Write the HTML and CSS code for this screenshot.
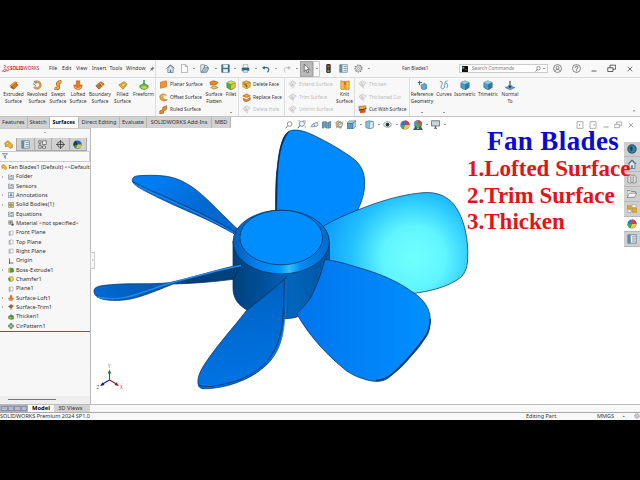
FILE: index.html
```
<!DOCTYPE html>
<html lang="en">
<head>
    <meta charset="UTF-8">
    <meta name="viewport" content="width=device-width, initial-scale=1.0">
    <title>SOLIDWORKS - Fan Blades1</title>
    <link rel="stylesheet" href="styles.css">
</head>
<body>
    <!-- shared icons -->
    <svg class="sprite" width="0" height="0">
        <symbol id="i-extrude" viewBox="0 0 12 12"><path d="M1 7l6-5 3 1-5 5z" fill="#f5a623" stroke="#a55a08" stroke-width=".6"/><path d="M2 9l6-5 3 2-5 5z" fill="#d97a1a" stroke="#7a4208" stroke-width=".6"/><path d="M2 7l3 3" stroke="#444"/></symbol>
        <symbol id="i-revolve" viewBox="0 0 12 12"><path d="M3 2a5 5 0 1 1-1 7l2-1a3 3 0 1 0 0-4z" fill="#f2a132" stroke="#8a5a20" stroke-width=".6"/><path d="M1 4l4 3M2 1l4 3" stroke="#777" stroke-width="1.2"/></symbol>
        <symbol id="i-sweep" viewBox="0 0 12 12"><path d="M2 10c5 1 5-2 4-4s0-4 4-4" fill="none" stroke="#a85a10" stroke-width="4"/><path d="M2 10c5 1 5-2 4-4s0-4 4-4" fill="none" stroke="#f3a43a" stroke-width="2.4"/></symbol>
        <symbol id="i-loft" viewBox="0 0 12 12"><path d="M4 1h4v5h3l-1 4-4 2-4-2-1-4h3z" fill="#ea7a22" stroke="#a84a0a" stroke-width=".6"/><path d="M2 8.500l4 2 4-2" fill="none" stroke="#ffc072"/></symbol>
        <symbol id="i-boundary" viewBox="0 0 12 12"><path d="M1 7l6-5 4 3-6 6z" fill="#e07a1c" stroke="#7b4208" stroke-width=".8"/><path d="M3 6l5 3M6 3l3 4" stroke="#ffd08a"/><path d="M4 7h3" stroke="#345" stroke-width="1.3"/></symbol>
        <symbol id="i-filled" viewBox="0 0 12 12"><path d="M1 6l6-4 4 3-5 6z" fill="#f5b53a" stroke="#94600c" stroke-width=".7"/><path d="M4 6l3-2 2 2-3 2z" fill="#ffe07a" stroke="#a66a08" stroke-width=".6"/></symbol>
        <symbol id="i-freeform" viewBox="0 0 12 12"><path d="M6 0v5" stroke="#2b7d2b" stroke-width="1.5"/><path d="M1 7c2-3 8-3 10 0v2c-2 3-8 3-10 0z" fill="#5cc24a" stroke="#2c6b23" stroke-width=".6"/><path d="M2 9c3-2 5-2 8 0-2 2-6 2-8 0z" fill="#f0c74a"/></symbol>
        <symbol id="i-planar" viewBox="0 0 12 12"><path d="M2 3l8-2v8l-8 2z" fill="#f3952f" stroke="#c26a10" stroke-width=".8"/></symbol>
        <symbol id="i-offset" viewBox="0 0 12 12"><path d="M1 4c3-4 6-3 9-1-3 0-5 1-5 3s3 3 6 3c-4 3-10 2-10-5z" fill="#f1a030" stroke="#9d6010" stroke-width=".7"/><path d="M3 5c2-2 5-2 7-1" stroke="#ffe18a" fill="none"/></symbol>
        <symbol id="i-ruled" viewBox="0 0 12 12"><path d="M1 8l4-2V3l5-2v5l-4 2v3l-5 1z" fill="#ea8b28" stroke="#9a5210" stroke-width=".8"/></symbol>
        <symbol id="i-flatten" viewBox="0 0 12 12"><path d="M1 3c3-3 7-2 10 0L8 6 2 6z" fill="#e88a24" stroke="#8e4f0c" stroke-width=".7"/><path d="M2 9l4-2 5 2-5 2z" fill="#f8c25a" stroke="#9a6a18" stroke-width=".7"/></symbol>
        <symbol id="i-fillet" viewBox="0 0 12 12"><path d="M1 3l5-2 5 2v6l-5 3-5-3z" fill="#4caf3c" stroke="#2d7723" stroke-width=".6"/><path d="M1 3l5-2 5 2-5 2z" fill="#f2ce48"/><path d="M6 6l5-2v5l-5 2z" fill="#f4b73b"/></symbol>
        <symbol id="i-cube" viewBox="0 0 12 12"><path d="M1 3l5-2 5 2v6l-5 3-5-3z" fill="#f1b638" stroke="#9c6a12" stroke-width=".7"/><path d="M1 3l5 2 5-2M6 5v6" stroke="#9c6a12" stroke-width=".7" fill="none"/><path d="M3 5l4 4" stroke="#333" stroke-width="1.3"/></symbol>
        <symbol id="i-replace" viewBox="0 0 12 12"><path d="M1 4l5-3 5 3-5 2z" fill="#f0a22e" stroke="#8e4d0c" stroke-width=".7"/><path d="M2 7l4 2 5-3v3l-5 3-4-2z" fill="#ee8a2a" stroke="#8e4a0c" stroke-width=".7"/></symbol>
        <symbol id="i-ghost" viewBox="0 0 12 12"><path d="M1 5l5-4 5 3-4 4-3-1z" fill="#e6e6e6" stroke="#bcbcbc" stroke-width=".8"/><path d="M3 7l5 4M4 3l4 6" stroke="#bcbcbc"/></symbol>
        <symbol id="i-knit" viewBox="0 0 12 12"><path d="M1 1l4 1v10l-4-1zM11 1L7 2v10l4-1z" fill="#f6c648" stroke="#c07c12" stroke-width=".8"/><path d="M5 1l1 5 1-5M6 3v8" stroke="#d86418" fill="none"/></symbol>
        <symbol id="i-cut" viewBox="0 0 12 12"><path d="M1 2l9-1 1 4-9 2z" fill="#f1a83a" stroke="#7d4b10" stroke-width=".7"/><path d="M2 7l8-1v4l-7 1z" fill="#d3541c"/><path d="M1 7l10-2" stroke="#333" stroke-width="1.2"/></symbol>
        <symbol id="i-refgeo" viewBox="0 0 12 12"><path d="M3 1v5M1 3h5" stroke="#2e7396" stroke-width="1.4"/><path d="M5 6l4-2 3 2v4l-4 2-3-2z" fill="#66a6c6" stroke="#2d5c77" stroke-width=".6"/></symbol>
        <symbol id="i-curves" viewBox="0 0 12 12"><path d="M1 2h2c3 2-2 5 0 8 2 2 4-1 4-4s1-5 3-5M8 3c3 2 3 4 1 7" fill="none" stroke="#4c86a8" stroke-width="1.1"/></symbol>
        <symbol id="i-iso" viewBox="0 0 12 12"><path d="M1 3l5-2 5 2v6l-5 3-5-3z" fill="#4f9cc3" stroke="#245a78" stroke-width=".6"/><path d="M1 3l5-2 5 2-5 2z" fill="#8fcbe4"/><path d="M6 5l5-2v6l-5 3z" fill="#2f789e"/></symbol>
        <symbol id="i-normal" viewBox="0 0 12 12"><path d="M0 9l6-2 6 2-6 3z" fill="#56a2c6" stroke="#245a78" stroke-width=".5"/><path d="M6 1v8M4.500 6.500L6 9l1.500-2.500" stroke="#234" stroke-width="1.2" fill="none"/></symbol>
        <symbol id="i-home" viewBox="0 0 12 12"><path d="M1 6l5-5 5 5" fill="none" stroke="#33566e" stroke-width="1.1"/><path d="M2.500 6v5.500h7V6L6 2.600z" fill="#e3edf3" stroke="#33566e" stroke-width=".8"/><path d="M5 7.500h2v4H5z" fill="#4b7891"/></symbol>
        <symbol id="i-doc" viewBox="0 0 12 12"><path d="M2 .5h5l3 3v8H2z" fill="#fff" stroke="#777" stroke-width=".7"/><path d="M7 .5v3h3" fill="none" stroke="#777" stroke-width=".7"/></symbol>
        <symbol id="i-open" viewBox="0 0 12 12"><path d="M1 1h5v10H1z" fill="#dbe8ef" stroke="#678" stroke-width=".8"/><path d="M2 11l3-6h7l-3 6z" fill="#a9c3d2" stroke="#456" stroke-width=".7"/><path d="M6 3c2-2 4-1 4 2" fill="none" stroke="#205a80"/></symbol>
        <symbol id="i-save" viewBox="0 0 12 12"><path d="M1 1h10v10H1z" fill="#4b7898" stroke="#294f6b" stroke-width=".8"/><path d="M3 1h6v4H3zM3 7h6v4H3z" fill="#eef3f6"/></symbol>
        <symbol id="i-print" viewBox="0 0 12 12"><path d="M3 1h6v4H3z" fill="#fff" stroke="#678" stroke-width=".7"/><path d="M1 5h10v4H1z" fill="#2f6384"/><path d="M3 8h6v3H3z" fill="#e6eef3" stroke="#456" stroke-width=".6"/></symbol>
        <symbol id="i-undo" viewBox="0 0 12 12"><path d="M3 4h4c4 0 4 5 1 7" fill="none" stroke="#2e6b90" stroke-width="1.700"/><path d="M0 4l4-3v6z" fill="#2e6b90"/></symbol>
        <symbol id="i-redo" viewBox="0 0 12 12"><path d="M9 4H5C1 4 1 9 4 11" fill="none" stroke="#bbb" stroke-width="1.400"/><path d="M12 4L8 1v6z" fill="#bbb"/></symbol>
        <symbol id="i-cursor" viewBox="0 0 12 12"><path d="M3 0v10l2.500-2.500L7 12l2-1-1.800-4H10z" fill="#fff" stroke="#333" stroke-width=".8"/></symbol>
        <symbol id="i-light" viewBox="0 0 12 12"><rect x="3" y="0" width="6" height="12" rx="1.500" fill="#333"/><circle cx="6" cy="3" r="1.700" fill="#e03a2c"/><circle cx="6" cy="6" r="1.200" fill="#645a20"/><circle cx="6" cy="9.300" r="1.700" fill="#38b04a"/></symbol>
        <symbol id="i-list" viewBox="0 0 12 12"><path d="M1 1h10v10H1z" fill="#f4f8fa" stroke="#4b6d82" stroke-width=".9"/><path d="M1 1h3.500v10H1z" fill="#5f8ba5"/><path d="M6 3.500h4M6 6h4M6 8.500h4" stroke="#4b6d82" stroke-width=".9"/></symbol>
        <symbol id="i-gear" viewBox="0 0 12 12"><circle cx="6" cy="6" r="4.600" fill="none" stroke="#777" stroke-width="1.500" stroke-dasharray="2 1.200"/><circle cx="6" cy="6" r="3.600" fill="#f5f5f5" stroke="#777" stroke-width=".8"/><circle cx="6" cy="6" r="1.500" fill="none" stroke="#777" stroke-width=".8"/></symbol>
        <symbol id="i-pin" viewBox="0 0 12 12"><path d="M7 1l4 4-2 .5L7 8l-.5 2L2 5.500 4 5l2.500-2z" fill="#777"/><path d="M4 8l-3 3" stroke="#777"/></symbol>
        <symbol id="i-user" viewBox="0 0 12 12"><circle cx="6" cy="6" r="5.300" fill="none" stroke="#555" stroke-width=".9"/><circle cx="6" cy="5" r="2" fill="none" stroke="#555" stroke-width=".9"/><path d="M2.500 9.500c1-3 6-3 7 0" fill="none" stroke="#555" stroke-width=".9"/></symbol>
        <symbol id="i-help" viewBox="0 0 12 12"><circle cx="6" cy="6" r="5.300" fill="none" stroke="#555" stroke-width=".9"/><path d="M4.300 4.800c0-2.400 3.500-2.300 3.500-.2C7.800 6 6 6 6 7.500M6 8.500v1.200" fill="none" stroke="#444" stroke-width="1.100"/></symbol>
        <symbol id="i-min" viewBox="0 0 12 12"><path d="M1 10h10" stroke="currentColor" stroke-width="1.600"/></symbol>
        <symbol id="i-restore" viewBox="0 0 12 12"><path d="M1 5h7v5H1zM4 5V1.500h7.500V7H8" fill="none" stroke="currentColor"/></symbol>
        <symbol id="i-close" viewBox="0 0 12 12"><path d="M1.500 1.500l9 9M10.500 1.500l-9 9" stroke="currentColor" stroke-width="1.400"/></symbol>
        <symbol id="i-pane" viewBox="0 0 12 12"><path d="M1.500 1h9v10h-9z" fill="none" stroke="currentColor"/><path d="M6 4v4L4 6z" fill="currentColor"/></symbol>
        <symbol id="i-pane-r" viewBox="0 0 12 12"><path d="M1.500 1h9v10h-9z" fill="none" stroke="currentColor"/><path d="M7 4v4l2-2z" fill="currentColor"/></symbol>
        <symbol id="i-search" viewBox="0 0 12 12"><circle cx="7" cy="4.500" r="3.500" fill="none" stroke="currentColor"/><path d="M4.500 7L1 11" stroke="currentColor" stroke-width="1.300"/></symbol>
        <symbol id="i-zoomarea" viewBox="0 0 12 12"><path d="M1 1h3M8 1h3v3M11 8v3" fill="none" stroke="#789" stroke-width=".8"/><circle cx="6.500" cy="5" r="3.500" fill="#eef4f7" stroke="#667" stroke-width=".9"/><path d="M4 7.500L1 11" stroke="#667" stroke-width="1.300"/></symbol>
        <symbol id="i-prev" viewBox="0 0 12 12"><path d="M1 9l3-4h4l3-3M1 9h5l2-4" fill="#d6dde1" stroke="#667882" stroke-width=".9"/><circle cx="8" cy="6" r="2.500" fill="#eef" stroke="#678" stroke-width=".9"/></symbol>
        <symbol id="i-section" viewBox="0 0 12 12"><path d="M0 3l3-1v8l-3 1zM4 2l3 1v8l-3-1zM8 3l4-1v8l-4 1z" fill="#6ba3bd" stroke="#406577" stroke-width=".7"/></symbol>
        <symbol id="i-dynview" viewBox="0 0 12 12"><path d="M1 3l4-2 5 3-2 7-6-2z" fill="#d7b98a" stroke="#7a7466" stroke-width=".7"/><circle cx="7" cy="6" r="3" fill="#d8eaf2" stroke="#577" stroke-width=".8"/><path d="M1 11L11 2" stroke="#d58a2c"/></symbol>
        <symbol id="i-orient" viewBox="0 0 12 12"><path d="M0 4h8v8H0z" fill="#609dbc" stroke="#345e76" stroke-width=".6"/><path d="M0 4l3-3h9L8 4zM8 12l4-4V1L8 4z" fill="#b4d3e1" stroke="#456f86" stroke-width=".6"/></symbol>
        <symbol id="i-display" viewBox="0 0 12 12"><path d="M1 2l4-1 6 1v8l-5 2-5-2z" fill="#89bdd4" stroke="#3f687d" stroke-width=".7"/><path d="M6 3l5-1v8l-5 2z" fill="#dbe9ef" stroke="#3f687d" stroke-width=".5"/></symbol>
        <symbol id="i-eye" viewBox="0 0 12 12"><path d="M0 6c3-5 9-5 12 0-3 5-9 5-12 0z" fill="#e7edef" stroke="#667" stroke-width=".8"/><circle cx="6" cy="6" r="2.500" fill="#333"/></symbol>
        <symbol id="i-ball" viewBox="0 0 12 12"><circle cx="6" cy="6" r="5.500" fill="#3d71c4"/><path d="M6 6V.5A5.500 5.500 0 0 1 11.500 6z" fill="#db3c34"/><path d="M6 6h5.500A5.500 5.500 0 0 1 4 11z" fill="#f1c644"/><path d="M6 6l-2 5A5.500 5.500 0 0 1 .5 6z" fill="#4aa950"/></symbol>
        <symbol id="i-appear" viewBox="0 0 12 12"><circle cx="6" cy="6" r="5.500" fill="#2a62b8"/><path d="M6 6L4 .8A5.500 5.500 0 0 0 1 8z" fill="#243a4c"/><path d="M6 6l5.500 0A5.500 5.500 0 0 1 4 11z" fill="#d8c83a"/><path d="M6 6l-2 5A5.500 5.500 0 0 1 1 8z" fill="#3c9a48"/></symbol>
        <symbol id="i-ballscene" viewBox="0 0 12 12"><circle cx="6" cy="5" r="4.800" fill="#58a25d"/><path d="M6 5V.2A4.800 4.800 0 0 1 10.800 5z" fill="#d6473f"/><path d="M6 5H1.200A4.800 4.800 0 0 1 6 .2z" fill="#5b8ac0"/><path d="M0 12l3-5 3 4 3-4 3 5z" fill="#3f5965"/></symbol>
        <symbol id="i-monitor" viewBox="0 0 12 12"><path d="M.5 1h11v7H.5z" fill="#c9d5dc" stroke="#555" stroke-width="1"/><path d="M4 11h4M6 8v3" stroke="#555" stroke-width="1.300"/></symbol>
        <symbol id="i-part" viewBox="0 0 12 12"><path d="M1 4l4-3 3 2 3 3v4L8 11 5 8 2 9z" fill="#f0b62e" stroke="#96690f" stroke-width=".8"/><circle cx="4.500" cy="4.500" r="1.400" fill="#fff4c0" stroke="#96690f" stroke-width=".6"/></symbol>
        <symbol id="i-config" viewBox="0 0 12 12"><path d="M1 1h3v3H1zM6 1h5v5H6zM1 7h3v4H1zM6 8h4v3H6z" fill="#eee" stroke="#555" stroke-width=".9"/><path d="M2.500 4v3M4 9h2" stroke="#555" stroke-width=".9"/></symbol>
        <symbol id="i-target" viewBox="0 0 12 12"><circle cx="6" cy="6" r="4" fill="none" stroke="#333" stroke-width="1"/><path d="M6 0v12M0 6h12" stroke="#333" stroke-width="1"/></symbol>
        <symbol id="i-filter" viewBox="0 0 12 12"><path d="M1 1h10L7 6v5L5 9.500V6z" fill="#cfe0ea" stroke="#3d6480" stroke-width="1.100"/></symbol>
        <symbol id="i-box" viewBox="0 0 12 12"><path d="M1 2h4l1 1h5v8H1z" fill="#edf0f2" stroke="#566671" stroke-width="1"/><path d="M3.500 5h5v4h-5z" fill="none" stroke="#566671" stroke-width=".9"/></symbol>
        <symbol id="i-annot" viewBox="0 0 12 12"><path d="M1 1h10v10H1z" fill="#edf2f8" stroke="#566671" stroke-width="1"/><path d="M3.500 9.500L6 3l2.500 6.500M4.500 7h3" fill="none" stroke="#2a56a8" stroke-width="1.200"/></symbol>
        <symbol id="i-bodies" viewBox="0 0 12 12"><path d="M1 1h10v10H1z" fill="#ecebdc" stroke="#566671" stroke-width="1"/><path d="M3 4l3-1 3 1v4L6 9.500 3 8z" fill="#c49e27" stroke="#6b571a" stroke-width=".7"/></symbol>
        <symbol id="i-material" viewBox="0 0 12 12"><path d="M1 2h9M1 5h9M1 8h5M2 1v8M5 1v8M8 1v5" stroke="#666" stroke-width="1.200"/><circle cx="9" cy="9" r="2.500" fill="#555"/></symbol>
        <symbol id="i-plane" viewBox="0 0 12 12"><path d="M2 3h2v8H2zM4 2h6v8H4z" fill="#fafafa" stroke="#778" stroke-width=".8"/></symbol>
        <symbol id="i-origin" viewBox="0 0 12 12"><path d="M3 1v9h8" fill="none" stroke="#333" stroke-width="1.400"/><circle cx="3" cy="10" r="1.500" fill="#b22"/></symbol>
        <symbol id="i-boss" viewBox="0 0 12 12"><path d="M1 3l4-2v9l-4 1z" fill="#efc33b" stroke="#7b6413" stroke-width=".6"/><path d="M5 3l4-1 2 2v6l-6 1z" fill="#3aa33d" stroke="#1f6722" stroke-width=".7"/></symbol>
        <symbol id="i-thicken" viewBox="0 0 12 12"><path d="M1 5l5-4 5 3v6l-5 1-5-2z" fill="#3aa33d" stroke="#1f6722" stroke-width=".7"/><path d="M3 6h4v4H3z" fill="#e89a3b"/></symbol>
        <symbol id="i-chamfer" viewBox="0 0 12 12"><circle cx="6" cy="6" r="5" fill="#efd256" stroke="#5b762b" stroke-width=".8"/><path d="M2 3a5 5 0 0 0 3 8V6z" fill="#43a03e"/></symbol>
        <symbol id="i-trim" viewBox="0 0 12 12"><path d="M1 5l5-4 5 3-5 4z" fill="#b7652e" stroke="#5c3517" stroke-width=".8"/><path d="M3 7l6 4M8 6l-3 5" stroke="#555"/></symbol>
        <symbol id="i-pattern" viewBox="0 0 12 12"><path d="M4 1h4v3H4zM4 8h4v3H4zM1 4h3v4H1zM8 4h3v4H8z" fill="#7cc46f" stroke="#2b6a28" stroke-width=".9"/></symbol>
        <symbol id="i-globe" viewBox="0 0 12 12"><circle cx="6" cy="6" r="5.700" fill="#285b79"/><circle cx="6" cy="6" r="4.200" fill="#3f7e9f"/><path d="M3 4l3-1 1 3-2 3z" fill="#1c3f55"/></symbol>
        <symbol id="i-library" viewBox="0 0 12 12"><path d="M1 3l3-2 2 1 2-1 3 2v7l-3 1-2-1-2 1-3-1z" fill="#eee" stroke="#666" stroke-width=".8"/><path d="M4 2v8M6 3v8M8 2v8" stroke="#777" stroke-width=".8"/></symbol>
        <symbol id="i-folder" viewBox="0 0 12 12"><path d="M0 10V2h4l1 1h5v2" fill="#eee" stroke="#666" stroke-width=".8"/><path d="M0 10l3-5h9l-3 5z" fill="#f6f6f6" stroke="#666" stroke-width=".8"/></symbol>
        <symbol id="i-palette" viewBox="0 0 12 12"><path d="M0 2h5v4H0zM6 5h6v5H6z" fill="#e3a92c" stroke="#a6741a" stroke-width=".5"/><path d="M6 1h5v3H6zM1 7h4v3H1z" fill="#fff" stroke="#888" stroke-width=".7"/></symbol>
    </svg>

    <div class="app">
        <header class="titlebar">
            <div class="brand">
                <svg class="brand-mark" viewBox="0 0 14 12"><path d="M3 1c4-1 5 2 1 4M1 11c3-5 8-6 6-1-1 2-4 1-6 1M13 3C9 2 8 4 11 6s0 5-4 4" fill="none" stroke="#c8202f" stroke-width="1.300"/></svg>
                <b>SOLID</b><span>WORKS</span>
            </div>
            <nav class="menu"><span>File</span><span>Edit</span><span>View</span><span>Insert</span><span>Tools</span><span>Window</span><svg class="ic xs"><use href="#i-pin"/></svg></nav>
            <div class="quick">
                <svg class="ic"><use href="#i-home"/></svg>
                <svg class="ic"><use href="#i-doc"/></svg><i class="caret"></i>
                <svg class="ic"><use href="#i-open"/></svg><i class="caret"></i>
                <svg class="ic"><use href="#i-save"/></svg><i class="caret"></i>
                <svg class="ic"><use href="#i-print"/></svg><i class="caret"></i>
                <svg class="ic s"><use href="#i-undo"/></svg><i class="caret"></i>
                <svg class="ic s"><use href="#i-redo"/></svg><i class="caret"></i>
                <span class="pick"><svg class="ic"><use href="#i-cursor"/></svg></span><span class="pick-more"><i class="caret"></i></span>
                <svg class="ic"><use href="#i-light"/></svg>
                <svg class="ic"><use href="#i-list"/></svg>
                <svg class="ic"><use href="#i-gear"/></svg><i class="caret"></i>
            </div>
            <span class="doc-title">Fan Blades1</span>
            <div class="search">
                <span class="prompt">&gt;_</span><span class="search-text">Search Commands</span>
                <svg class="ic xs"><use href="#i-search"/></svg><i class="caret"></i>
            </div>
            <div class="window-buttons">
                <svg class="ic"><use href="#i-user"/></svg>
                <svg class="ic"><use href="#i-help"/></svg>
                <svg class="ic xs"><use href="#i-min"/></svg>
                <svg class="ic"><use href="#i-restore"/></svg>
                <svg class="ic xs"><use href="#i-close"/></svg>
            </div>
        </header>

        <section class="ribbon">
            <div class="group create">
                <div class="tool"><svg class="ic big"><use href="#i-extrude"/></svg><span>Extruded<br>Surface</span></div>
                <div class="tool"><svg class="ic big"><use href="#i-revolve"/></svg><span>Revolved<br>Surface</span></div>
                <div class="tool"><svg class="ic big"><use href="#i-sweep"/></svg><span>Swept<br>Surface</span></div>
                <div class="tool"><svg class="ic big"><use href="#i-loft"/></svg><span>Lofted<br>Surface</span></div>
                <div class="tool"><svg class="ic big"><use href="#i-boundary"/></svg><span>Boundary<br>Surface</span></div>
                <div class="tool"><svg class="ic big"><use href="#i-filled"/></svg><span>Filled<br>Surface</span></div>
                <div class="tool"><svg class="ic big"><use href="#i-freeform"/></svg><span>Freeform</span></div>
            </div>
            <div class="group derive">
                <div class="stack">
                    <span><svg class="ic"><use href="#i-planar"/></svg>Planar Surface</span>
                    <span><svg class="ic"><use href="#i-offset"/></svg>Offset Surface</span>
                    <span><svg class="ic"><use href="#i-ruled"/></svg>Ruled Surface</span>
                </div>
                <div class="tool"><svg class="ic big"><use href="#i-flatten"/></svg><span>Surface<br>Flatten</span></div>
                <div class="tool"><svg class="ic big"><use href="#i-fillet"/></svg><span>Fillet</span><i class="caret more"></i></div>
            </div>
            <div class="group faces">
                <div class="stack">
                    <span><svg class="ic"><use href="#i-cube"/></svg>Delete Face</span>
                    <span><svg class="ic"><use href="#i-replace"/></svg>Replace Face</span>
                    <span class="off"><svg class="ic"><use href="#i-ghost"/></svg>Delete Hole</span>
                </div>
            </div>
            <div class="group modify">
                <div class="stack">
                    <span class="off"><svg class="ic"><use href="#i-ghost"/></svg>Extend Surface</span>
                    <span class="off"><svg class="ic"><use href="#i-ghost"/></svg>Trim Surface</span>
                    <span class="off"><svg class="ic"><use href="#i-ghost"/></svg>Untrim Surface</span>
                </div>
                <div class="tool"><svg class="ic big"><use href="#i-knit"/></svg><span>Knit<br>Surface</span></div>
            </div>
            <div class="group thicken">
                <div class="stack">
                    <span class="off"><svg class="ic"><use href="#i-ghost"/></svg>Thicken</span>
                    <span class="off"><svg class="ic"><use href="#i-ghost"/></svg>Thickened Cut</span>
                    <span><svg class="ic"><use href="#i-cut"/></svg>Cut With Surface</span>
                </div>
            </div>
            <div class="group views">
                <div class="tool"><svg class="ic big"><use href="#i-refgeo"/></svg><span>Reference<br>Geometry</span><i class="caret more"></i></div>
                <div class="tool"><svg class="ic big"><use href="#i-curves"/></svg><span>Curves</span><i class="caret more"></i></div>
                <div class="tool"><svg class="ic big"><use href="#i-iso"/></svg><span>Isometric</span></div>
                <div class="tool"><svg class="ic big"><use href="#i-iso"/></svg><span>Trimetric</span></div>
                <div class="tool"><svg class="ic big"><use href="#i-normal"/></svg><span>Normal<br>To</span></div>
            </div>
            <span class="collapse">⌃</span>
        </section>

        <main class="workspace">
            <nav class="tabs">
                <span>Features</span><span>Sketch</span><span class="active">Surfaces</span><span>Direct Editing</span><span>Evaluate</span><span>SOLIDWORKS Add-Ins</span><span>MBD</span>
            </nav>
            <div class="columns">
                <aside class="panel">
                    <div class="grip"></div>
                    <div class="panel-tabs">
                        <span class="active"><svg class="ic"><use href="#i-part"/></svg></span>
                        <span><svg class="ic"><use href="#i-list"/></svg></span>
                        <span><svg class="ic"><use href="#i-config"/></svg></span>
                        <span><svg class="ic"><use href="#i-target"/></svg></span>
                        <span><svg class="ic"><use href="#i-appear"/></svg></span>
                    </div>
                    <div class="filter"><svg class="ic xs"><use href="#i-filter"/></svg></div>
                    <div class="root"><svg class="ic xs"><use href="#i-part"/></svg>Fan Blades1 (Default) &lt;&lt;Default</div>
                    <ul class="tree">
                        <li class="open"><svg class="ic xs"><use href="#i-box"/></svg>Folder</li>
                        <li><svg class="ic xs"><use href="#i-box"/></svg>Sensors</li>
                        <li class="open"><svg class="ic xs"><use href="#i-annot"/></svg>Annotations</li>
                        <li class="open"><svg class="ic xs"><use href="#i-bodies"/></svg>Solid Bodies(1)</li>
                        <li><svg class="ic xs"><use href="#i-box"/></svg>Equations</li>
                        <li><svg class="ic xs"><use href="#i-material"/></svg>Material &lt;not specified&gt;</li>
                        <li><svg class="ic xs"><use href="#i-plane"/></svg>Front Plane</li>
                        <li><svg class="ic xs"><use href="#i-plane"/></svg>Top Plane</li>
                        <li><svg class="ic xs"><use href="#i-plane"/></svg>Right Plane</li>
                        <li><svg class="ic xs"><use href="#i-origin"/></svg>Origin</li>
                        <li class="open"><svg class="ic xs"><use href="#i-boss"/></svg>Boss-Extrude1</li>
                        <li><svg class="ic xs"><use href="#i-chamfer"/></svg>Chamfer1</li>
                        <li><svg class="ic xs"><use href="#i-plane"/></svg>Plane1</li>
                        <li class="open"><svg class="ic xs"><use href="#i-loft"/></svg>Surface-Loft1</li>
                        <li class="open"><svg class="ic xs"><use href="#i-trim"/></svg>Surface-Trim1</li>
                        <li><svg class="ic xs"><use href="#i-thicken"/></svg>Thicken1</li>
                        <li><svg class="ic xs"><use href="#i-pattern"/></svg>CirPattern1</li>
                    </ul>
                    <div class="rollback"></div>
                    <div class="scroll"><div class="thumb"></div></div>
                </aside>
                <div class="viewport">
                    <svg class="model" viewBox="91 127 549 276">
                        <defs>
                            <linearGradient id="body" x1="233" x2="330" y1="0" y2="0" gradientUnits="userSpaceOnUse"><stop offset="0" stop-color="#00427e"/><stop offset=".3" stop-color="#004f99"/><stop offset=".6" stop-color="#0066be"/><stop offset="1" stop-color="#0054a0"/></linearGradient>
                            <linearGradient id="rim" x1="233" x2="330" y1="0" y2="0" gradientUnits="userSpaceOnUse"><stop offset="0" stop-color="#005fb8"/><stop offset=".25" stop-color="#0080f0"/><stop offset=".48" stop-color="#0098ff"/><stop offset=".58" stop-color="#35bdff"/><stop offset=".7" stop-color="#008cf5"/><stop offset="1" stop-color="#0068c8"/></linearGradient>
                            <radialGradient id="glow" cx="414" cy="257" r="98" gradientUnits="userSpaceOnUse"><stop offset="0" stop-color="#70ffff"/><stop offset=".32" stop-color="#60f5ff"/><stop offset=".65" stop-color="#22c0ff"/><stop offset="1" stop-color="#0a98fb"/></radialGradient>
                            <linearGradient id="front" x1="297" x2="430" y1="0" y2="0" gradientUnits="userSpaceOnUse"><stop offset="0" stop-color="#0075ee"/><stop offset="1" stop-color="#0090ff"/></linearGradient>
                            <linearGradient id="low" x1="240" x2="250" y1="290" y2="388" gradientUnits="userSpaceOnUse"><stop offset="0" stop-color="#0064c6"/><stop offset="1" stop-color="#0074e6"/></linearGradient>
                            <linearGradient id="left" x1="94" x2="242" y1="0" y2="0" gradientUnits="userSpaceOnUse"><stop offset="0" stop-color="#0069d2"/><stop offset=".5" stop-color="#0059b2"/><stop offset=".65" stop-color="#003d7c"/><stop offset="1" stop-color="#00427e"/></linearGradient>
                            <linearGradient id="upper" x1="160" x2="200" y1="175" y2="215" gradientUnits="userSpaceOnUse"><stop offset="0" stop-color="#007cf2"/><stop offset="1" stop-color="#0068d0"/></linearGradient>
                        </defs>
                        <g stroke="#06294d" stroke-width=".7" stroke-linejoin="round">
                            <!-- top blade -->
                            <path d="M275.700 212C275.700 190 275.900 176 277.300 166.700C279 150 282 132 291 129.500C298 128 306 130 320 137.500C332 143.500 340 148.500 349 154.500C360 161.500 365 170 364.700 183C364.500 193 361.500 201 357.700 209L323 227z" fill="#008aff"/>
                            <path d="M275.700 209C275.700 190 275.900 176 277.300 166.700C279 150 282 134 289 130.500C280 142 278.500 160 277.500 176L276.700 209z" fill="#01325f" stroke-width=".4"/>
                            <!-- upper left blade -->
                            <path d="M132.300 179.300C132.500 176.500 134 175 139 174.700C150 174 158 174.300 166 175.200C180 177 193 185 206.700 198C219 210 228 219 238 228.500L234 232.700C222 226 211 220.500 200 215.500C182 207.500 165 200.500 150 192.500C139 187 132 183 132.300 179.300z" fill="url(#upper)"/>
                            <path d="M132.500 180.500C155 193 190 204 234.500 230.500" fill="none" stroke-width=".6"/>
                            <path d="M134 182.500C155 195 190 206 233.500 231.500" fill="none" stroke="#1695ff" stroke-width=".8"/>
                            <!-- right blade -->
                            <path d="M323.500 225C334 219 346 213.500 357.700 209C379 200.500 401 193.500 423 191.700C438 190.500 450 196 457 208C465 221 468.500 240 467.700 257C467.500 268 464 275 457 279C446 286 431 290 415 292.300L325 266z" fill="url(#glow)"/>
                            <!-- hub -->
                            <path d="M233 240V287C233 297 238 304 247 309L285 317.700C289 317.700 293 317 297 316L320 295L329.500 265V240z" fill="url(#body)"/>
                            <ellipse cx="281.200" cy="241" rx="48.200" ry="31.900" fill="url(#rim)"/>
                            <ellipse cx="281.200" cy="236.500" rx="41.400" ry="27.300" fill="#008eff"/>
                            <!-- left blade -->
                            <path d="M94 290C94 285.500 100 284.600 110 283.800C132 281.500 151 284 170 281.500C194 276.500 218 268 241.700 263.300L240 267L233.300 278.300C213 281 193 282.500 173 283C161 288 151 292 140 295.500C130 299 120 299.700 110 299.300C99 298.500 94 295 94 290z" fill="url(#left)"/>
                            <path d="M97 296C127 303 148 287 173 281.500C195 275.500 218 269 241 264.500" fill="none" stroke="#188fee" stroke-width="1.300"/>
                            <!-- lower left blade -->
                            <path d="M285.700 276.700C278 284 272 289 266.700 293.300C260 299 254 303.500 246.700 309.300C233 327 219 342 206.700 360C202 367 198.500 373 198 379C197.500 384 199 387.500 203 387.700C214 388 226 385.500 236.700 381.700C247 378 256 373 263.300 366.700C273 359 278 349 280.500 341C284 330 284.500 310 286 297z" fill="url(#low)"/>
                            <path d="M199 384C201 386 208 386 216 384.700C232 382 248 377 260 367C270 359 278 346 281 330C284 311 284 294 284.300 279" fill="none" stroke-width=".7"/>
                            <path d="M286 278V299C284.800 322 284 342 271 358" fill="none" stroke="#238ce5" stroke-width=".8"/>
                            <!-- lower right blade -->
                            <path d="M325 258.300C335 260 344 262 353 265C367 269 380 273 390 278C399 282 407 287 413.300 291.700C424 298 430 308 430.300 318C430.300 325 429 332 426.700 335C422 342 418 348 413 353C407 360 402 366 396.700 370C391 375 387 379 381 380C376 381 371 380 367 379C359 377 353 374 346.700 370C337 362 328 354 320 345C311 335 303 324 296.700 312.700C303 306 310 300 313 291.700C319 280 322 269 325 258.300z" fill="url(#front)"/>
                            <path d="M430.300 318C430 327 427 333 425 336C419 345 406 360 396 369.500C389 376 384 379 376 379.500" fill="none" stroke="#022e5e" stroke-width="1.400"/>
                        </g>
                        <!-- axis triad -->
                        <g class="triad">
                            <path d="M109.500 379V370" stroke="#187a18"/><path d="M107.800 372.500l1.700-4 1.700 4z" fill="#187a18"/>
                            <path d="M109.500 379l7 4" stroke="#a31515"/><path d="M114.500 384l4.500 1-2.700-3.700z" fill="#a31515"/>
                            <path d="M109.500 379l-7 4" stroke="#15158f"/><path d="M104.500 384l-4.500 1 2.700-3.700z" fill="#15158f"/>
                            <text x="108.100" y="367" fill="#777">Y</text><text x="120" y="387.500" fill="#d44">X</text><text x="96.500" y="387.500" fill="#55c">Z</text>
                        </g>
                    </svg>
                    <span class="splitter">‹</span>
                    <div class="taskpane">
                        <span><svg class="ic"><use href="#i-globe"/></svg></span>
                        <span><svg class="ic"><use href="#i-home"/></svg></span>
                        <span><svg class="ic"><use href="#i-library"/></svg></span>
                        <span><svg class="ic"><use href="#i-folder"/></svg></span>
                        <span><svg class="ic"><use href="#i-palette"/></svg></span>
                        <span class="active"><svg class="ic"><use href="#i-ball"/></svg></span>
                        <span><svg class="ic"><use href="#i-list"/></svg></span>
                    </div>
                    <div class="caption">
                        <h1>Fan Blades</h1>
                        <p>1.Lofted Surface</p>
                        <p>2.Trim Surface</p>
                        <p>3.Thicken</p>
                    </div>
                </div>
            </div>
            <div class="view-tools">
                <svg class="ic s"><use href="#i-search"/></svg>
                <svg class="ic"><use href="#i-zoomarea"/></svg>
                <svg class="ic"><use href="#i-prev"/></svg>
                <svg class="ic"><use href="#i-section"/></svg>
                <svg class="ic"><use href="#i-dynview"/></svg>
                <svg class="ic"><use href="#i-orient"/></svg><i class="caret"></i>
                <svg class="ic"><use href="#i-display"/></svg><i class="caret"></i>
                <svg class="ic"><use href="#i-eye"/></svg><i class="caret"></i>
                <svg class="ic big"><use href="#i-ball"/></svg>
                <svg class="ic big"><use href="#i-ballscene"/></svg><i class="caret"></i>
                <svg class="ic"><use href="#i-monitor"/></svg><i class="caret"></i>
            </div>
            <div class="doc-buttons">
                <svg class="ic s"><use href="#i-pane"/></svg>
                <svg class="ic s"><use href="#i-pane-r"/></svg>
                <svg class="ic xs"><use href="#i-min"/></svg>
                <svg class="ic s"><use href="#i-restore"/></svg>
                <svg class="ic xs"><use href="#i-close"/></svg>
            </div>
        </main>

        <div class="sheet-tabs">
            <span class="nav"><i></i><i></i><i></i><i></i></span>
            <span class="model-tab">Model</span><span class="views-tab">3D Views</span>
        </div>
        <footer class="status">
            <span class="version">SOLIDWORKS Premium 2024 SP1.0</span>
            <span class="mode">Editing Part</span>
            <span class="units">MMGS</span>
            <span class="units-more">▴</span>
            <svg class="ic xs"><use href="#i-gear"/></svg>
        </footer>
    </div>
</body>
</html>
```

FILE: styles.css
```
* {
    box-sizing: border-box;
}
body {
    margin: 0;
    padding: 60px 0;
    width: 640px;
    height: 480px;
    overflow: hidden;
    background-color: #000;
    color: #333;
    font-family: "Noto Sans", "Open Sans", sans-serif;
    font-size: 5.2px;
    line-height: 6.5px;
    white-space: nowrap;
}
.sprite {
    display: block;
}
.app {
    display: flex;
    flex-direction: column;
    height: 360px;
    background-color: #f8f8f8;
    overflow: hidden;
}
.ic {
    width: 9px;
    height: 9px;
    flex: none;
}
.ic.s {
    width: 8px;
    height: 8px;
}
.ic.xs {
    width: 6px;
    height: 6px;
}
.ic.big {
    width: 10px;
    height: 10px;
}
.caret {
    width: 0;
    height: 0;
    border: 1.2px solid transparent;
    border-top: 1.5px solid #333;
    border-bottom: 0;
}

/* title bar */
.titlebar {
    display: grid;
    grid-template-columns: 45px 111px 216px 86px 90px 92px;
    align-items: center;
    height: 17.500px;
    border-bottom: 1px solid #dcdcdc;
}
.brand {
    display: flex;
    align-items: center;
    padding-left: 1.500px;
    color: #c8202f;
    font-size: 4.500px;
}
.brand-mark {
    width: 8px;
    height: 7px;
    margin-right: .5px;
}
.menu {
    display: grid;
    grid-template-columns: 13px 14px 16px 17.500px 16.500px 23px 8px;
    align-items: center;
    padding-left: 4px;
    height: 17px;
    border-right: 1px solid #ddd;
}
.quick {
    display: grid;
    grid-template-columns: 18px 11px 8px 13px 9px 11px 8px 13px 8px 12px 8px 13px 7px 13px 7px 16px 14px 16px 5px;
    align-items: center;
    justify-items: center;
    padding-left: 5px;
    height: 17px;
}
.pick, .pick-more {
    display: flex;
    align-items: center;
    justify-content: center;
    width: 13px;
    height: 16px;
    background-color: #b9b9b9;
    border: 1px solid #a3a3a3;
}
.pick-more {
    width: 7px;
    background-color: #f8f8f8;
    border-color: #ccc;
}
.doc-title {
    padding-left: 30px;
    font-size: 4.700px;
}
.search {
    display: flex;
    align-items: center;
    height: 9px;
    margin: 0 0 0 1px;
    padding: 0 2px;
    background-color: #fff;
    border: 1px solid #ccc;
}
.prompt {
    width: 6px;
    height: 6px;
    background-color: #111;
    color: #fff;
    font: bold 4px/5px "Liberation Mono", monospace;
}
.search-text {
    width: 68px;
    padding-left: 4px;
    color: #777;
    font-size: 4.800px;
}
.search .caret {
    margin-left: 2px;
}
.window-buttons {
    display: grid;
    grid-template-columns: 18px 19px 17px 18px 18px;
    align-items: center;
    justify-items: center;
    padding-left: .5px;
}

/* ribbon */
.ribbon {
    display: flex;
    height: 39px;
    border-bottom: 1px solid #c4c4c4;
    font-size: 4.800px;
}
.group {
    display: grid;
    height: 38px;
    border-right: 1px solid #ddd;
}
.create {
    grid-template-columns: 27px 20px 22px 18px 26px 19px 23px;
    width: 156px;
}
.derive {
    grid-template-columns: 48px 20px 14px;
    width: 83px;
}
.faces {
    width: 46px;
}
.modify {
    grid-template-columns: 50px 19px;
    width: 70px;
}
.thicken {
    width: 55px;
}
.views {
    grid-template-columns: 24px 20px 22px 24px 20px;
    width: 220px;
    border-right: 0;
}
.tool {
    display: flex;
    position: relative;
    flex-direction: column;
    align-items: center;
    padding-top: 2.500px;
    text-align: center;
}
.tool .ic {
    margin-bottom: 1px;
}
.more {
    position: absolute;
    top: 34px;
}
.stack {
    display: grid;
    grid-template-rows: repeat(3, 12.700px);
    padding-left: 2.500px;
    padding-top: .5px;
}
.stack span {
    display: flex;
    align-items: center;
    gap: 2.500px;
}
.off {
    color: #bbb;
}
.collapse {
    align-self: flex-end;
    margin: 0 0 0 auto;
    padding-right: 4px;
}

/* command tabs */
.workspace {
    position: relative;
    height: 287px;
    background-color: #fff;
}
.tabs {
    display: grid;
    grid-template-columns: 27.500px 22px 29.500px 41px 27px 65px 19px;
    width: 231px;
    height: 11px;
    background-color: #d2d2d2;
    font-size: 5.500px;
    line-height: 11px;
    text-align: center;
}
.tabs span {
    border-right: 1px solid #b4b4b4;
}
.tabs .active {
    background-color: #fff;
    color: #000;
    font-weight: bold;
    font-size: 5.300px;
}
.columns {
    display: flex;
    height: 276px;
}

/* feature tree */
.panel {
    display: flex;
    flex-direction: column;
    width: 91px;
    background-color: #f7f7f7;
    border-right: 1px solid #bbb;
    overflow: hidden;
    font-size: 5.550px;
}
.grip {
    height: 10.500px;
    border-top: 1px solid #c8c8c8;
}
.grip::after {
    content: "";
    display: block;
    width: 2px;
    height: 1px;
    margin: 3px 0 0 44px;
    background-color: #aaa;
}
.panel-tabs {
    display: grid;
    grid-template-columns: repeat(5, 17.400px);
    height: 13px;
    background-color: #f4f4f4;
}
.panel-tabs span {
    display: flex;
    align-items: center;
    justify-content: center;
    background-color: #d0d0d0;
    border: solid #aaa;
    border-width: 0 1px 1px 0;
}
.panel-tabs .active {
    background-color: #f7f7f7;
    border-bottom: 0;
}
.filter {
    display: flex;
    align-items: center;
    height: 10.500px;
    padding-left: 2px;
    border: 1px solid #ccc;
    border-left: 0;
    background-color: #f9f9f9;
}
.root {
    display: flex;
    align-items: center;
    gap: 1.500px;
    height: 10.500px;
    padding: 1px 0 0 1px;
    letter-spacing: -.03px;
}
.tree {
    margin: 0;
    padding: 0 0 0 8px;
    list-style: none;
}
.tree li {
    display: flex;
    position: relative;
    align-items: center;
    gap: 2px;
    height: 9.340px;
}
.open::before {
    content: "";
    position: absolute;
    left: -6px;
    border: 1.200px solid transparent;
    border-left: 1.700px solid #777;
}
.rollback {
    height: 1px;
    background-color: #1a6fb8;
}
.scroll {
    height: 8px;
    margin-top: auto;
    padding: 3px 0 0 8px;
    background-color: #efefef;
}
.thumb {
    width: 48px;
    height: 1px;
    background-color: #777;
}

/* graphics area */
.viewport {
    position: relative;
    width: 549px;
}
.model {
    display: block;
    width: 549px;
    height: 276px;
}
.triad {
    font-size: 4.500px;
    stroke-width: 1.100;
}
.splitter {
    position: absolute;
    left: -1px;
    top: 124px;
    width: 5px;
    height: 17px;
    border: 1px solid #ccc;
    background-color: #f7f7f7;
    font-size: 4px;
    line-height: 14px;
    text-align: center;
}
.taskpane {
    position: absolute;
    top: 14px;
    right: 0;
    display: grid;
    grid-template-rows: repeat(7, 15.100px);
    width: 16px;
    background-color: #cfcfcf;
}
.taskpane span {
    display: flex;
    align-items: center;
    justify-content: center;
    border-bottom: 1px solid #b8b8b8;
}
.taskpane .active {
    background-color: #fff;
}
.taskpane .ic {
    width: 10px;
    height: 10px;
}
.caption {
    position: absolute;
    left: 376px;
    top: -1.500px;
    font-family: "Liberation Serif", serif;
    font-weight: bold;
    color: #e0141a;
}
.caption h1 {
    margin: 0 0 0 20px;
    padding-top: 1px;
    font-size: 27px;
    line-height: 29px;
    letter-spacing: .4px;
    color: #0a0ad2;
}
.caption p {
    margin: 0;
    font-size: 23px;
    line-height: 26.700px;
}
.view-tools {
    position: absolute;
    left: 283px;
    top: 2px;
    display: grid;
    grid-template-columns: 12px 13px 12px 13px 12px 13px 6px 11px 7px 10px 9px 8px 17px 1px 17px 2px;
    align-items: center;
    justify-items: center;
    height: 12px;
    color: #666;
}
.doc-buttons {
    position: absolute;
    left: 574px;
    top: 2px;
    display: grid;
    grid-template-columns: repeat(5, 12.700px);
    align-items: center;
    justify-items: center;
    height: 12px;
    color: #888;
}

/* bottom bars */
.sheet-tabs {
    display: flex;
    height: 9px;
    border-top: 1px solid #bbb;
    border-bottom: 1px solid #aaa;
    line-height: 7.500px;
    font-size: 5.800px;
}
.nav {
    display: grid;
    grid-template-columns: repeat(4, 6.500px);
    width: 28px;
    padding: 1px;
    background-color: #a9abc0;
}
.nav i {
    border: 1px solid #8f92ad;
    background-color: #b9bbcd;
}
.model-tab {
    width: 26px;
    background-color: #fff;
    color: #000;
    font-weight: bold;
    text-align: center;
}
.views-tab {
    width: 36px;
    padding-left: 4px;
    background-color: #d2d2d2;
}
.status {
    display: grid;
    grid-template-columns: 526px 71px 26px 11px 6px;
    align-items: center;
    height: 8px;
    font-size: 5.500px;
}
.units-more {
    font-size: 3px;
}
```
